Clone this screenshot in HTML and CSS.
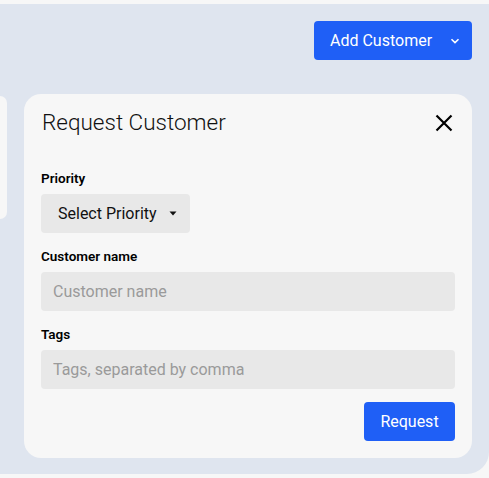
FILE: index.html
```html
<!DOCTYPE html>
<html>
<head>
<meta charset="utf-8">
<link rel="stylesheet" href="styles.css">
</head>
<body>
<div class="app">
  <div class="toolbar">
    <button class="btn btn-primary add-btn">
      <span>Add Customer</span>
      <svg class="chev" width="10" height="6" viewBox="0 0 10 6"><path d="M1.5 1.2 L5 4.6 L8.5 1.2" fill="none" stroke="#fff" stroke-width="1.6"/></svg>
    </button>
  </div>
  <div class="content">
    <div class="side-panel"></div>
    <div class="card">
      <div class="card-head">
        <h2 class="title">Request Customer</h2>
        <svg class="close" width="18" height="18" viewBox="0 0 18 18"><path d="M1.5 1.5 L16.5 16.5 M16.5 1.5 L1.5 16.5" stroke="#000" stroke-width="2.2" fill="none"/></svg>
      </div>
      <div class="field">
        <label class="label">Priority</label>
        <button class="select-btn">
          <span>Select Priority</span>
          <svg class="caret" width="8" height="5" viewBox="0 0 8 5"><path d="M0.5 0.5 L7.5 0.5 L4 4.5 Z" fill="#111"/></svg>
        </button>
      </div>
      <div class="field">
        <label class="label">Customer name</label>
        <input class="input" type="text" placeholder="Customer name">
      </div>
      <div class="field">
        <label class="label">Tags</label>
        <input class="input" type="text" placeholder="Tags, separated by comma">
      </div>
      <div class="actions">
        <button class="btn btn-primary req-btn">Request</button>
      </div>
    </div>
  </div>
</div>
</body>
</html>
```
FILE: styles.css
```css
* { box-sizing: border-box; }
html, body { margin: 0; padding: 0; }
body {
  background: #f7f7f7;
  font-family: Roboto, "Liberation Sans", Arial, sans-serif;
  width: 489px;
  height: 478px;
  overflow: hidden;
}
.app {
  margin-top: 4px;
  height: 470px;
  background: #dfe5ef;
  border-bottom-right-radius: 22px;
}
.toolbar {
  display: flex;
  justify-content: flex-end;
  padding: 17px 17px 0 0;
}
.btn {
  border: none;
  font-family: inherit;
  cursor: pointer;
}
.btn-primary {
  background: #1f5ff6;
  color: #fff;
  border-radius: 4px;
  font-size: 16px;
}
.add-btn {
  width: 158px;
  height: 39px;
  display: flex;
  align-items: center;
  padding: 0 0 0 16px;
}
.add-btn .chev { margin-left: 18px; }
.content {
  display: flex;
  gap: 17px;
  margin-top: 34px;
}
.side-panel {
  width: 7px;
  height: 123px;
  margin-top: 2px;
  background: #f7f7f7;
  border-radius: 0 9px 9px 0;
}
.card {
  width: 448px;
  height: 364px;
  background: #f7f7f7;
  border-radius: 17px;
  padding: 15px 17px 0 17px;
}
.card-head {
  display: flex;
  justify-content: space-between;
  align-items: center;
  height: 26px;
  margin-bottom: 34px;
}
.title {
  margin: 0 0 0 1px;
  font-size: 22.5px;
  font-weight: 300;
  color: #111;
}
.close { margin-right: 2px; margin-top: 1px; }
.field {
  display: flex;
  flex-direction: column;
  align-items: flex-start;
  margin-bottom: 14px;
}
.label {
  font-size: 13.5px;
  font-weight: 600;
  color: #000;
  height: 25px;
  line-height: 18px;
}
.select-btn {
  height: 39px;
  width: 149px;
  background: #e8e8e8;
  border: none;
  border-radius: 4px;
  font-family: inherit;
  font-size: 16px;
  color: #111;
  display: flex;
  align-items: center;
  padding: 0 0 0 17px;
}
.select-btn .caret { margin-left: 12px; }
.input {
  width: 100%;
  height: 39px;
  background: #e8e8e8;
  border: none;
  border-radius: 4px;
  font-family: inherit;
  font-size: 16px;
  padding: 0 12px;
  color: #111;
}
.input::placeholder { color: #9a9a9a; }
.actions {
  display: flex;
  justify-content: flex-end;
  margin-top: -1px;
}
.req-btn {
  width: 91px;
  height: 39px;
}
```
